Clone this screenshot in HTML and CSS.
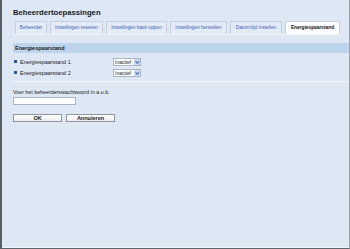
FILE: index.html
```html
<!DOCTYPE html>
<html>
<head>
<meta charset="utf-8">
<link rel="stylesheet" href="styles.css">
</head>
<body>
<div class="page">
  <h1 class="title">Beheerdertoepassingen</h1>
  <div class="tabs">
    <span class="tab w1">Beheerder</span>
    <span class="tab w2">Instellingen resetten</span>
    <span class="tab w3">Instellingen back-uppen</span>
    <span class="tab w4">Instellingen herstellen</span>
    <span class="tab w5">Datum/tijd instellen</span>
    <span class="tab w6 active">Energiespaarstand</span>
  </div>
  <div class="section-head">Energiespaarstand</div>
  <div class="rows">
    <div class="row"><span class="label"><i class="bullet"></i>Energiespaarstand 1</span><span class="select"><span class="val">Inactief</span><span class="arrow"></span></span></div>
    <div class="row"><span class="label"><i class="bullet"></i>Energiespaarstand 2</span><span class="select"><span class="val">Inactief</span><span class="arrow"></span></span></div>
  </div>
  <div class="sep"></div>
  <div class="pw-label">Voer het beheerderswachtwoord in a.u.b.</div>
  <div class="input"></div>
  <div class="buttons">
    <span class="btn">OK</span>
    <span class="btn">Annuleren</span>
  </div>
</div>
</body>
</html>
```
FILE: styles.css
```css
html, body { margin: 0; padding: 0; }
body { font-family: "Liberation Sans", Arial, sans-serif; color: #1a1a1a; }
.page {
  width: 350px; height: 249px; box-sizing: border-box;
  background: #dde8f4;
  border-left: 2px solid #585e66;
  border-right: 1px solid #9ca5af;
  border-bottom: 1px solid #5f656c;
  box-shadow: inset 0 -1px 0 #f2f6fb;
  padding: 8px 0 0 11px;
  overflow: hidden;
}
.title { margin: 0; font-size: 7.7px; font-weight: bold; line-height: 10px; height: 10px; }
.tabs {
  display: flex; gap: 3px; margin-top: 3px; padding-left: 2px; height: 14px;
  box-sizing: border-box; border-bottom: 1px solid #f1f5fa; margin-right: 8px;
}
.tab {
  height: 13px; box-sizing: border-box; padding: 0; font-size: 4.8px; line-height: 12px;
  color: #4060b8; background: #e3ecf6; border: 1px solid #c2cfdc; border-bottom: none;
  white-space: nowrap; text-align: center; overflow: hidden; flex: none;
}
.w1 { width: 32px; }
.w2 { width: 53px; }
.w3 { width: 61px; }
.w4 { width: 57px; }
.w5 { width: 52px; }
.w6 { width: 55px; }
.tab.active { background: #fbfcfe; color: #111; font-weight: bold; border-color: #c8d2dc; }
.section-head {
  margin-top: 8px; height: 10px; line-height: 10px; background: #bdd4ec;
  font-size: 5.5px; font-weight: bold; padding-left: 2px;
}
.rows { padding-top: 3px; }
.row { display: flex; align-items: center; height: 11px; }
.label { width: 100px; font-size: 5.5px; display: flex; align-items: center; }
.bullet { display: inline-block; width: 3px; height: 3px; background: #2d4f9e; margin: 0 3px 0 1px; }
.select {
  display: flex; height: 8px; box-sizing: border-box; border: 1px solid #a9b6c4; background: #fff;
}
.val { font-size: 5px; line-height: 6px; padding: 0 2px 0 1px; width: 17px; }
.arrow { width: 6px; background: #c9d8f0; position: relative; }
.arrow::after {
  content: ""; position: absolute; left: 1.5px; top: 1.5px; width: 1.5px; height: 1.5px;
  border-right: 1px solid #4363b5; border-bottom: 1px solid #4363b5; transform: rotate(45deg);
}
.sep { height: 1px; background: #f3f7fb; margin-top: 3px; }
.pw-label { font-size: 5.3px; margin-top: 7px; line-height: 7px; }
.input { width: 63px; height: 8px; box-sizing: border-box; background: #fff; border: 1px solid #aab4be; margin-top: 1px; }
.buttons { display: flex; gap: 4px; margin-top: 9px; }
.btn {
  width: 49px; height: 8px; box-sizing: border-box; border: 1px solid #8e959c; background: linear-gradient(#ffffff, #eceef0);
  font-size: 5.5px; font-weight: bold; text-align: center; line-height: 6px;
}
```
